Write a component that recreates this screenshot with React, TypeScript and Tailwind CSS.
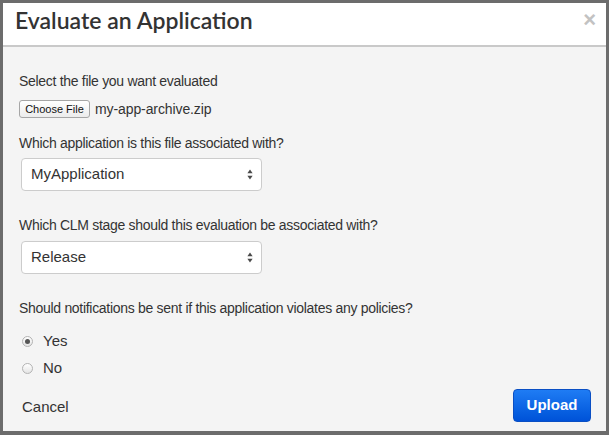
import React from "react";

function SelectArrows() {
  return (
    <svg width="6" height="11" viewBox="0 0 6 11" className="shrink-0">
      <path d="M3 0.5 L5.6 4.2 L0.4 4.2 Z" fill="#4a4a4a" />
      <path d="M3 10.5 L5.6 6.8 L0.4 6.8 Z" fill="#4a4a4a" />
    </svg>
  );
}

function FakeSelect({ value }: { value: string }) {
  return (
    <div className="ml-[2px] flex h-[33px] w-[241px] items-center justify-between rounded-[4px] border border-[#cccccc] bg-white pl-[9px] pr-[8px] text-[15px] text-[#333333]">
      <span>{value}</span>
      <SelectArrows />
    </div>
  );
}

function Radio({ label, checked }: { label: string; checked?: boolean }) {
  return (
    <label className="flex h-[20px] items-center pl-[3px] text-[15px] leading-[20px] text-[#333333]">
      <span className="flex h-[11px] w-[11px] items-center justify-center rounded-full border border-[#b3b3b3] bg-gradient-to-b from-[#ffffff] to-[#e4e4e4]">
        {checked && <span className="h-[5px] w-[5px] rounded-full bg-[#555555]" />}
      </span>
      <span className="ml-[10px]">{label}</span>
    </label>
  );
}

export default function App() {
  return (
    <div className="h-[435px] w-[609px] bg-[#6c6c6c] pb-[4px] pl-[3px] pr-[3px] pt-[3px] font-['Liberation_Sans',Arial,sans-serif]">
      <div className="flex h-full flex-col bg-[#f4f4f4]">
        <div className="flex h-[44px] shrink-0 items-center justify-between border-b-2 border-[#c9c9c9] bg-white pl-[12px] pr-[10px]">
          <h1 className="pb-[8px] font-['Lato',sans-serif] text-[23px] font-semibold text-[#333333]">
            Evaluate an Application
          </h1>
          <span className="pb-[8px] text-[22px] font-bold leading-none text-[#c2c2c2]">×</span>
        </div>

        <div className="flex flex-1 flex-col pl-[16px] pr-[15px] pt-[24px] text-[#333333]">
          <p className="text-[14px] leading-[20px] tracking-[-0.3px]">Select the file you want evaluated</p>
          <div className="mt-[9px] flex h-[18px] items-center">
            <button className="flex h-[18px] w-[71px] items-center justify-center rounded-[3px] border border-[#a6a6a6] bg-gradient-to-b from-[#ffffff] to-[#ececec] text-[11px] text-[#111111]">
              Choose File
            </button>
            <span className="ml-[5px] text-[14px] tracking-[-0.1px]">my-app-archive.zip</span>
          </div>

          <p className="mt-[15px] text-[14px] leading-[20px] tracking-[-0.3px]">Which application is this file associated with?</p>
          <div className="mt-[5px]">
            <FakeSelect value="MyApplication" />
          </div>

          <p className="mt-[24px] text-[14px] leading-[20px] tracking-[-0.3px]">Which CLM stage should this evaluation be associated with?</p>
          <div className="mt-[6px]">
            <FakeSelect value="Release" />
          </div>

          <p className="mt-[24px] text-[14px] leading-[20px] tracking-[-0.3px]">
            Should notifications be sent if this application violates any policies?
          </p>
          <div className="mt-[13px]">
            <Radio label="Yes" checked />
          </div>
          <div className="mt-[7px]">
            <Radio label="No" />
          </div>

          <div className="mt-[11px] flex items-center justify-between">
            <span className="pl-[3px] pt-[3px] text-[15px] text-[#333333]">Cancel</span>
            <button className="h-[33px] w-[78px] rounded-[4px] border border-[#0a4fc4] bg-gradient-to-b from-[#1f7cf4] to-[#0052d8] text-[15px] font-bold text-white">
              Upload
            </button>
          </div>
        </div>
      </div>
    </div>
  );
}
